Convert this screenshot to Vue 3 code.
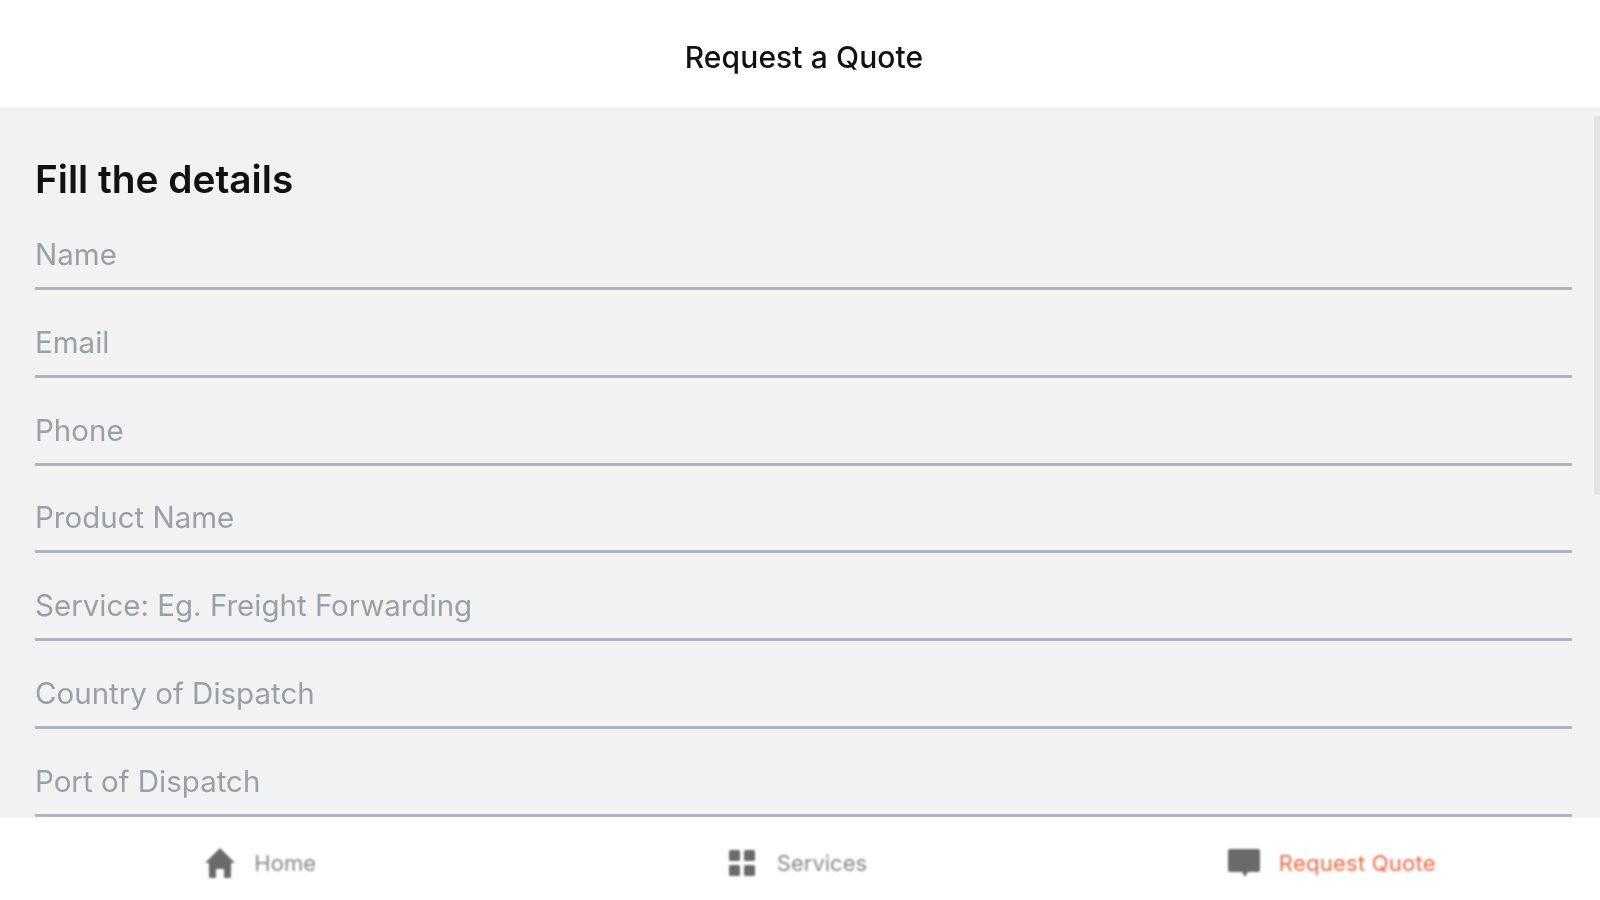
<template>
  <div class="app">
    <header class="top-bar">Request a Quote</header>
    <main class="content">
      <span class="scroll-thumb"></span>
      <h1 class="heading">Fill the details</h1>
      <input
        v-for="field in fields"
        :key="field"
        class="field"
        type="text"
        :placeholder="field"
      />
    </main>
    <nav class="tabs">
      <a class="tab tab-home">
        <svg class="icon" width="32" height="32" viewBox="0 0 32 32">
          <path d="M16 1 L31 16 L27 16 L27 30 Q27 31 26 31 L20 31 L20 22 L12 22 L12 31 L6 31 Q5 31 5 30 L5 16 L1 16 Z" fill="#6a6a6a" />
        </svg>
        <span>Home</span>
      </a>
      <a class="tab tab-services">
        <svg class="icon" width="26" height="26" viewBox="0 0 26 26">
          <rect x="0" y="0" width="11" height="11" rx="1.5" fill="#6a6a6a" />
          <rect x="15" y="0" width="11" height="11" rx="1.5" fill="#6a6a6a" />
          <rect x="0" y="15" width="11" height="11" rx="1.5" fill="#6a6a6a" />
          <rect x="15" y="15" width="11" height="11" rx="1.5" fill="#6a6a6a" />
        </svg>
        <span>Services</span>
      </a>
      <a class="tab tab-quote active">
        <svg class="icon" width="34" height="30" viewBox="0 0 34 30">
          <path d="M3 1 H31 Q33 1 33 3 V22 Q33 24 31 24 H21 L18 29 L15 24 H3 Q1 24 1 22 V3 Q1 1 3 1 Z" fill="#6a6a6a" />
        </svg>
        <span>Request Quote</span>
      </a>
    </nav>
  </div>
</template>

<script setup>
const fields = [
  'Name',
  'Email',
  'Phone',
  'Product Name',
  'Service: Eg. Freight Forwarding',
  'Country of Dispatch',
  'Port of Dispatch',
  'Country of Delivery',
];
</script>

<style>
html,
body {
  margin: 0;
  overflow: hidden;
}
</style>

<style scoped>
.app {
  display: flex;
  flex-direction: column;
  height: 100vh;
  background: #fff;
  font-family: Inter, 'Noto Sans', sans-serif;
  overflow: hidden;
}
.top-bar {
  flex: none;
  height: 111px;
  padding: 6px 0 0 8px;
  display: flex;
  align-items: center;
  justify-content: center;
  box-sizing: border-box;
  font-size: 30px;
  font-weight: 500;
  letter-spacing: 0.1px;
  color: #111;
  background: #fff;
  border-bottom: 3px solid #ececec;
  filter: blur(0.7px);
}
.content {
  position: relative;
  flex: 1;
  min-height: 0;
  overflow: hidden;
  padding: 46px 28px 0 35px;
  background: #f2f2f2;
}
.heading {
  margin: 0 0 22px;
  font-size: 38.8px;
  line-height: 44px;
  font-weight: 600;
  color: #111;
  filter: blur(0.7px);
}
.field {
  display: block;
  width: 100%;
  height: 67px;
  box-sizing: border-box;
  margin: 0 0 20.8px;
  padding: 0 0 2px;
  border: 0;
  border-bottom: 3px solid #b2b4bb;
  border-radius: 0;
  outline: 0;
  background: transparent;
  font-family: inherit;
  font-size: 29.5px;
  color: #111;
  filter: blur(0.7px);
}
.field::placeholder {
  color: #9aa0a8;
  opacity: 1;
}
.scroll-thumb {
  position: absolute;
  top: 5px;
  right: 0;
  width: 6px;
  height: 379px;
  background: #e4e4e4;
}
.tabs {
  flex: none;
  height: 82px;
  padding-top: 8px;
  box-sizing: border-box;
  display: grid;
  grid-template-columns: 1fr 1fr 1fr;
  background: #fff;
  filter: blur(1px);
}
.tab {
  display: flex;
  align-items: center;
  justify-content: center;
  gap: 18px;
  font-size: 22px;
  color: #8a8a8a;
}
.tab-home {
  padding-right: 13px;
}
.tab-services {
  gap: 22px;
  padding-right: 4px;
}
.tab-quote {
  padding-right: 4px;
  letter-spacing: 0.25px;
}
.tab.active {
  color: #ee6a40;
}
</style>
